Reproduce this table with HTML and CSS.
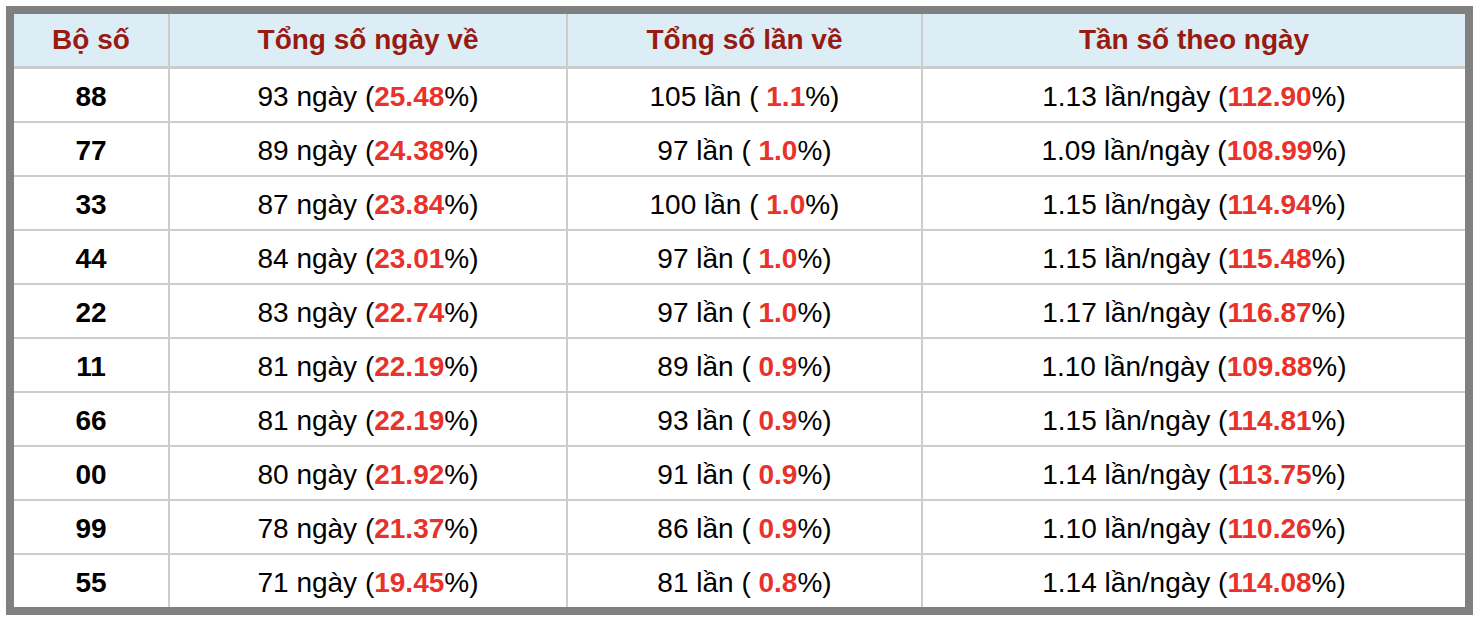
FILE: index.html
```html
<!DOCTYPE html>
<html lang="vi">
<head>
<meta charset="utf-8">
<link rel="stylesheet" href="styles.css">
</head>
<body>
<div class="frame">
<table class="stats">
<colgroup>
<col class="c1"><col class="c2"><col class="c3"><col class="c4">
</colgroup>
<thead>
<tr><th>Bộ số</th><th>Tổng số ngày về</th><th>Tổng số lần về</th><th>Tần số theo ngày</th></tr>
</thead>
<tbody>
<tr><td class="num">88</td><td>93 ngày (<b>25.48</b>%)</td><td>105 lần ( <b>1.1</b>%)</td><td>1.13 lần/ngày (<b>112.90</b>%)</td></tr>
<tr><td class="num">77</td><td>89 ngày (<b>24.38</b>%)</td><td>97 lần ( <b>1.0</b>%)</td><td>1.09 lần/ngày (<b>108.99</b>%)</td></tr>
<tr><td class="num">33</td><td>87 ngày (<b>23.84</b>%)</td><td>100 lần ( <b>1.0</b>%)</td><td>1.15 lần/ngày (<b>114.94</b>%)</td></tr>
<tr><td class="num">44</td><td>84 ngày (<b>23.01</b>%)</td><td>97 lần ( <b>1.0</b>%)</td><td>1.15 lần/ngày (<b>115.48</b>%)</td></tr>
<tr><td class="num">22</td><td>83 ngày (<b>22.74</b>%)</td><td>97 lần ( <b>1.0</b>%)</td><td>1.17 lần/ngày (<b>116.87</b>%)</td></tr>
<tr><td class="num">11</td><td>81 ngày (<b>22.19</b>%)</td><td>89 lần ( <b>0.9</b>%)</td><td>1.10 lần/ngày (<b>109.88</b>%)</td></tr>
<tr><td class="num">66</td><td>81 ngày (<b>22.19</b>%)</td><td>93 lần ( <b>0.9</b>%)</td><td>1.15 lần/ngày (<b>114.81</b>%)</td></tr>
<tr><td class="num">00</td><td>80 ngày (<b>21.92</b>%)</td><td>91 lần ( <b>0.9</b>%)</td><td>1.14 lần/ngày (<b>113.75</b>%)</td></tr>
<tr><td class="num">99</td><td>78 ngày (<b>21.37</b>%)</td><td>86 lần ( <b>0.9</b>%)</td><td>1.10 lần/ngày (<b>110.26</b>%)</td></tr>
<tr><td class="num">55</td><td>71 ngày (<b>19.45</b>%)</td><td>81 lần ( <b>0.8</b>%)</td><td>1.14 lần/ngày (<b>114.08</b>%)</td></tr>
</tbody>
</table>
</div>
</body>
</html>
```
FILE: styles.css
```css
html, body {
  margin: 0;
  padding: 0;
  background: #ffffff;
}
body {
  padding: 6px;
  font-family: "Liberation Sans", Arial, Helvetica, sans-serif;
  color: #000;
}
.frame {
  width: 1451px;
  border: 8px solid #808080;
  background: #fff;
}
.stats {
  width: 100%;
  border-collapse: collapse;
  table-layout: fixed;
}
.c1 { width: 155px; }
.c2 { width: 398px; }
.c3 { width: 355px; }
.c4 { width: 543px; }
.stats th, .stats td {
  text-align: center;
  vertical-align: middle;
  padding: 0;
  font-size: 28px;
  line-height: 32px;
  border-left: 2px solid #cccccc;
  border-top: 2px solid #cccccc;
}
.stats th:first-child, .stats td:first-child {
  border-left: none;
}
.stats thead th {
  border-top: none;
  height: 52px;
  background: #ddedf5;
  color: #981b12;
  font-weight: bold;
  border-bottom: 3px solid #cccccc;
}
.stats tbody tr:first-child td {
  border-top: none;
}
.stats td {
  height: 49px;
  padding-top: 3px;
}
.stats td.num {
  font-weight: bold;
}
.stats td b {
  color: #e8322a;
  font-weight: bold;
}
```
